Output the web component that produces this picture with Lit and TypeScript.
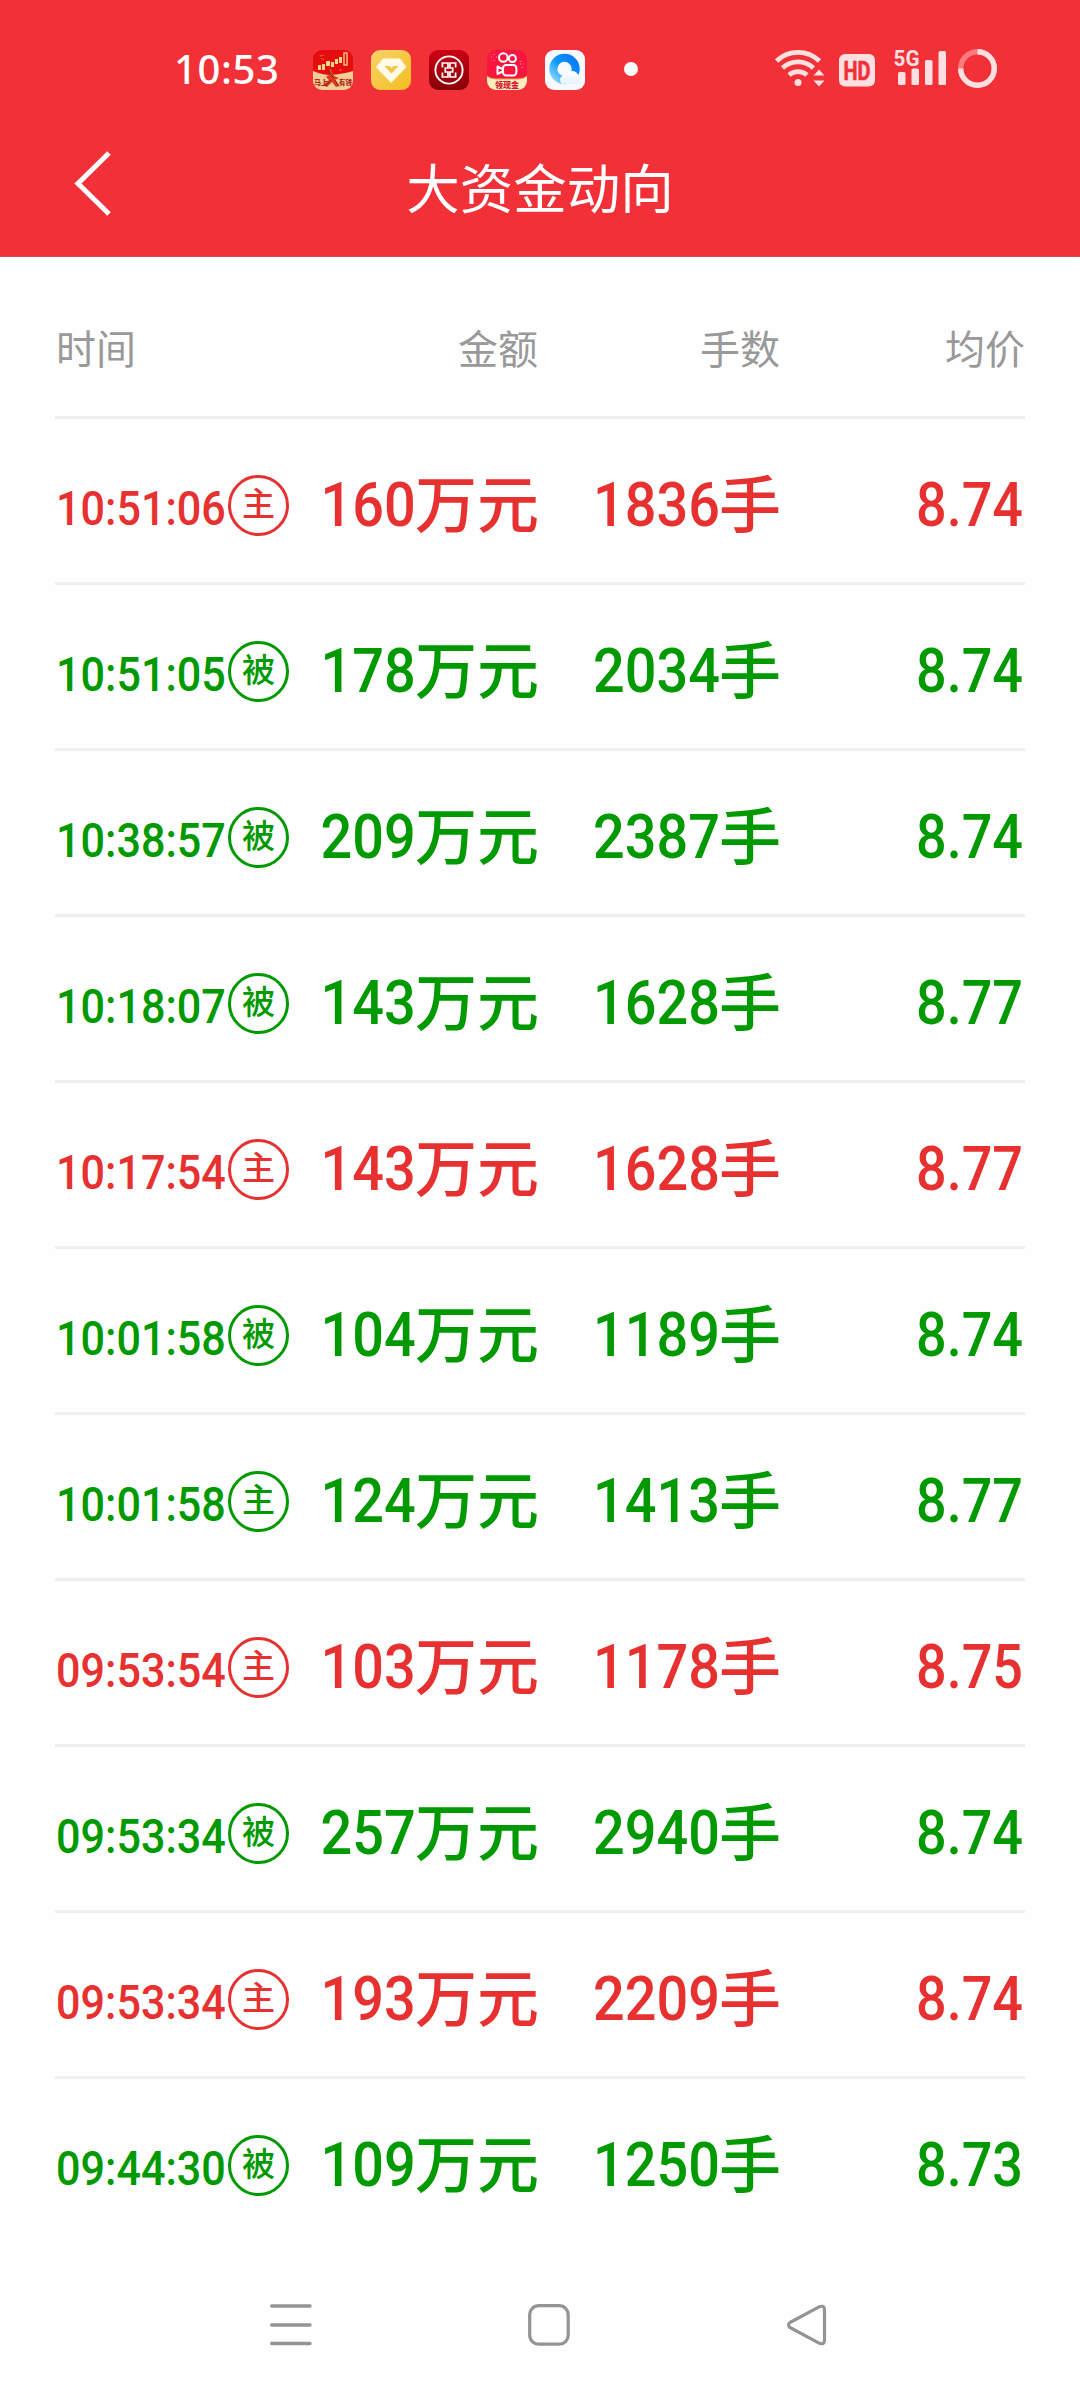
import { LitElement, html, css } from "lit";
import { customElement } from "lit/decorators.js";

interface Trade {
  time: string;
  kind: "主" | "被";
  amount: string;
  lots: string;
  price: string;
  up?: boolean;
}

const trades: Trade[] = [
  { time: "10:51:06", kind: "主", amount: "160", lots: "1836", price: "8.74", up: true },
  { time: "10:51:05", kind: "被", amount: "178", lots: "2034", price: "8.74" },
  { time: "10:38:57", kind: "被", amount: "209", lots: "2387", price: "8.74" },
  { time: "10:18:07", kind: "被", amount: "143", lots: "1628", price: "8.77" },
  { time: "10:17:54", kind: "主", amount: "143", lots: "1628", price: "8.77", up: true },
  { time: "10:01:58", kind: "被", amount: "104", lots: "1189", price: "8.74" },
  { time: "10:01:58", kind: "主", amount: "124", lots: "1413", price: "8.77" },
  { time: "09:53:54", kind: "主", amount: "103", lots: "1178", price: "8.75", up: true },
  { time: "09:53:34", kind: "被", amount: "257", lots: "2940", price: "8.74" },
  { time: "09:53:34", kind: "主", amount: "193", lots: "2209", price: "8.74", up: true },
  { time: "09:44:30", kind: "被", amount: "109", lots: "1250", price: "8.73" },
];

@customElement("status-bar")
class StatusBar extends LitElement {
  static styles = css`
    :host { display: flex; height: 138px; align-items: center; color: #fff; padding: 0 82px 0 174px; box-sizing: border-box; }
    .clock { width: 138px; font: 500 40px/60px "Noto Sans", sans-serif; letter-spacing: 0.6px; white-space: nowrap; }
    .apps { display: flex; gap: 18px; align-items: center; margin-left: 1px; padding-top: 2px; }
    .apps svg, .sys svg { display: block; }
    .dot { width: 14px; height: 14px; border-radius: 50%; background: #fff; margin-left: 39px; }
    .sys { margin-left: auto; display: flex; align-items: center; }
    .tiny { font-family: "Noto Sans CJK SC", sans-serif; font-weight: 900; }
    .hd { font: 700 25px "Roboto", sans-serif; }
    .net { font: 700 22px "Roboto", sans-serif; }
  `;
  render() {
    return html`
      <span class="clock">10:53</span>
      <div class="apps">
        <svg width="40" height="40" viewBox="0 0 40 40">
          <clipPath id="r1"><rect width="40" height="40" rx="9" /></clipPath>
          <g clip-path="url(#r1)">
            <rect width="40" height="40" fill="#e60d10" />
            <path d="M0 21 Q10 25 17 25 Q30 24 40 21 V40 H0Z" fill="#f3cf97" />
            <g fill="#f8d48a"><rect x="5" y="15" width="3" height="5" /><rect x="9" y="14" width="3" height="6" /><rect x="13" y="11" width="4" height="5" /><rect x="18" y="12" width="3" height="5" /><rect x="22" y="9" width="3" height="5" /><rect x="26" y="7" width="3" height="6" /></g>
            <rect x="31" y="3" width="3" height="12" fill="none" stroke="#f8d48a" stroke-width="1.3" />
            <path d="M7 6l4-1M8 8l3 2M26 20h3" stroke="#f0682b" />
            <path d="M16 18l3 2 2 6 5 2-4 2 5 6-4 1-4-5-5 5-4-2 6-5-3-3 4-3z" fill="#dd3a1d" />
            <path d="M15 20l3 5 3 3M13 35l5-5M25 35l-3-5" stroke="#7d2c18" stroke-width="1" fill="none" />
            <text class="tiny" x="1" y="35" font-size="7" fill="#b3231a">马上</text>
            <text class="tiny" x="26" y="35" font-size="6.500" fill="#b3231a">有钱</text>
          </g>
        </svg>
        <svg width="40" height="40" viewBox="0 0 40 40">
          <defs><linearGradient id="gy" x2="1" y2="1"><stop stop-color="#f8d36b" /><stop offset="1" stop-color="#f4bd1e" /></linearGradient></defs>
          <rect width="40" height="40" rx="9" fill="url(#gy)" />
          <path d="M12 9h17l6 8-15 15.500L5.500 17z" fill="#fffbe9" stroke="#fffbe9" stroke-width="1" stroke-linejoin="round" />
          <path d="M13.500 16h5l2 2 2-2h5l-7 7.500z" fill="#f3c445" />
        </svg>
        <svg width="40" height="40" viewBox="0 0 40 40">
          <defs><linearGradient id="gr" x2="0" y2="1"><stop stop-color="#cc0014" /><stop offset="1" stop-color="#870007" /></linearGradient></defs>
          <rect width="40" height="40" rx="9" fill="url(#gr)" />
          <circle cx="20" cy="20" r="13.600" fill="none" stroke="#fff" stroke-width="1.900" />
          <path d="M12.500 13H19V18H16.300V22H19V27H12.500M27.500 13H21V18H23.700V22H21V27H27.500M13.400 12.500V17.500M26.600 12.500V17.500M13.400 27.500V22.500M26.600 27.500V22.500" fill="none" stroke="#fff" stroke-width="1.700" />
        </svg>
        <svg width="40" height="40" viewBox="0 0 40 40">
          <clipPath id="r4"><rect width="40" height="40" rx="9" /></clipPath>
          <g clip-path="url(#r4)">
            <rect width="40" height="40" fill="#fa1440" />
            <path d="M0 26 Q3 29 9 29 H31 Q37 29 40 26 V40 H0Z" fill="#ffedbf" />
            <path d="M0 26 Q3 29 9 29 H31 Q37 29 40 26" fill="none" stroke="#f3a13d" />
            <g fill="none" stroke="#fff" stroke-width="2"><circle cx="16.300" cy="7.500" r="4.300" /><circle cx="25.400" cy="8.500" r="3.500" /><rect x="16" y="15" width="13.400" height="10.400" rx="3.200" /><path d="M15.500 19 L10.500 16.500 V24 L15.500 21.500" stroke-linejoin="round" /></g>
            <path d="M4 7h1M7 4v1M7 10v1M9 7h1M33 14h1M36 14h1M34 11v1M35 17v1" stroke="#ffb28a" />
            <text class="tiny" x="8" y="38" font-size="8" fill="#d61530">领现金</text>
          </g>
        </svg>
        <svg width="40" height="40" viewBox="0 0 40 40">
          <defs><linearGradient id="gb" x1="1" y1="0" x2="0" y2="1"><stop stop-color="#0878f8" /><stop offset=".5" stop-color="#0a98fb" /><stop offset="1" stop-color="#8bd6fb" /></linearGradient>
          <linearGradient id="gc" x2="0" y2="1"><stop stop-color="#fff" /><stop offset="1" stop-color="#e5f2fd" /></linearGradient></defs>
          <rect width="40" height="40" rx="9" fill="#f7fafe" />
          <circle cx="19.500" cy="19" r="11.200" fill="none" stroke="url(#gb)" stroke-width="8" />
          <path d="M17 34a5 5 0 0 1 0-8 q2-1 4-.5 a6.500 6.500 0 0 1 12-1 q3.500.5 3.500 4.500 q0 5-5 5z" fill="url(#gc)" />
        </svg>
      </div>
      <span class="dot"></span>
      <div class="sys">
        <svg width="224" height="46" viewBox="0 0 224 46" fill="none">
          <g stroke="#ffdfe0" stroke-width="4.800"><path d="M2.500 15 A31 31 0 0 1 45.500 15" /><path d="M8.500 22 A22.500 22.500 0 0 1 39.500 22" /><path d="M15 29 A13.500 13.500 0 0 1 33 29" /></g>
          <g fill="#ffdfe0"><circle cx="24" cy="36.500" r="3.500" /><path d="M39.500 29.500h11l-5.500-6zM39.500 34.500h11l-5.500 6z" />
          <rect x="65" y="8" width="36" height="32.500" rx="6" />
          <rect x="124" y="26" width="7.500" height="13" rx="1.500" /><rect x="137.500" y="22.500" width="7.500" height="16.500" rx="1.500" /><rect x="151" y="14" width="7.500" height="25" rx="1.500" /><rect x="164.500" y="5" width="7.500" height="34" rx="1.500" /></g>
          <text class="hd" x="69.500" y="33.500" textLength="27" lengthAdjust="spacingAndGlyphs" fill="#f13037" stroke="#f13037" stroke-width=".6">HD</text>
          <text class="net" x="119.500" y="19.500" textLength="26" lengthAdjust="spacingAndGlyphs" fill="#ffdfe0">5G</text>
          <circle cx="203.500" cy="22.500" r="16.800" stroke="#fa7a80" stroke-width="5.400" />
          <path d="M203.500 5.700 A16.800 16.800 0 1 1 186.700 22.500" stroke="#ffdfe0" stroke-width="5.400" />
        </svg>
      </div>
    `;
  }
}

@customElement("trade-row")
class TradeRow extends LitElement {
  static properties = { trade: { attribute: false } };
  declare trade: Trade;
  static styles = css`
    :host { display: block; }
    .row { display: grid; grid-template-columns: 236px 247px 242px 245px; height: 163px; padding-top: 6px; box-sizing: border-box; align-items: center; color: #009a00; }
    .row.up { color: #e63130; }
    .when { display: flex; align-items: center; padding-top: 3px; }
    .time { width: 173px; display: block; font: 500 49px/61px "Roboto", sans-serif; white-space: nowrap; padding-top: 7px; }
    .time span { display: inline-block; transform: translateX(1px) scaleX(0.88); transform-origin: left; }
    .badge { width: 61px; height: 61px; flex: none; box-sizing: border-box; border: 3px solid currentColor; border-radius: 50%; font: 500 33px/49px "Noto Sans CJK SC", sans-serif; text-align: center; }
    .value { display: flex; justify-content: flex-end; align-items: baseline; font: 500 62px/70px "Roboto", sans-serif; }
    .num { display: inline-block; transform: translate(1px, -2px) scaleX(0.9); transform-origin: right; }
    .price { padding: 3px 2px 0 0; }
    .price .num { transform: scaleX(0.87); }
    .unit { font-family: "Noto Sans CJK SC", sans-serif; font-weight: 500; margin-right: -1px; }
  `;
  render() {
    const t = this.trade;
    return html`<div class="row ${t.up ? "up" : ""}">
      <div class="when"><span class="time"><span>${t.time}</span></span><span class="badge">${t.kind}</span></div>
      <div class="value"><span class="num">${t.amount}</span><span class="unit">万元</span></div>
      <div class="value"><span class="num">${t.lots}</span><span class="unit">手</span></div>
      <div class="value price"><span class="num">${t.price}</span></div>
    </div>`;
  }
}

@customElement("app-root")
class AppRoot extends LitElement {
  static styles = css`
    :host { display: flex; flex-direction: column; width: 1080px; height: 2400px; overflow: hidden; background: #fefefe; font-family: "Noto Sans CJK SC", sans-serif; }
    .top { background: #f13037; height: 257px; flex: none; box-sizing: border-box; border-bottom: 1px solid #d04a52; }
    .title-bar { display: grid; grid-template-columns: 200px 1fr 200px; height: 118px; align-items: center; color: #fff; }
    .back { display: block; margin: -28px 0 0 72px; }
    .title { margin: 0; text-align: center; font-size: 53.5px; line-height: 70px; font-weight: 400; padding-bottom: 22px; }
    .list { padding: 0 55px; flex: 1; }
    .head { display: grid; grid-template-columns: 236px 247px 242px 245px; height: 159px; padding-top: 20px; box-sizing: border-box; align-items: center; text-align: right; font-size: 40px; line-height: 60px; color: #999; }
    .head span:first-child { text-align: left; padding-left: 1px; }
    .line { height: 3px; background: #eee; }
    .nav { flex: none; height: 150px; display: grid; grid-template-columns: 1fr 42px 1fr; align-items: center; padding: 1px 252px 0 270px; }
    .nav svg { display: block; }
    .nav svg:last-child { justify-self: end; }
  `;
  render() {
    return html`
      <header class="top">
        <status-bar></status-bar>
        <div class="title-bar">
          <svg class="back" width="42" height="66" viewBox="0 0 42 66" fill="none" stroke="#fff" stroke-width="5"><path d="M37 3 L6 33.500 L37 64" /></svg>
          <h1 class="title">大资金动向</h1>
        </div>
      </header>
      <main class="list">
        <div class="head"><span>时间</span><span>金额</span><span>手数</span><span>均价</span></div>
        ${trades.map((t) => html`<div class="line"></div><trade-row .trade=${t}></trade-row>`)}
      </main>
      <nav class="nav">
        <svg width="42" height="42" viewBox="0 0 42 42" stroke="#949494" stroke-width="3.400" stroke-linecap="round"><path d="M1.700 2H40M1.700 21H40M1.700 39.500H40" /></svg>
        <svg width="42" height="42" viewBox="0 0 42 42" fill="none" stroke="#949494" stroke-width="3.200"><rect x="1.700" y="1.700" width="38.500" height="38.500" rx="9" /></svg>
        <svg width="42" height="42" viewBox="0 0 42 42" fill="none" stroke="#949494" stroke-width="3.200" stroke-linejoin="round"><path d="M33.500 2.700 L4 18.500 Q1 21 4 23.500 L33.500 39.300 Q38.500 41 38.500 36 V6 Q38.500 1 33.500 2.700Z" /></svg>
      </nav>
    `;
  }
}
